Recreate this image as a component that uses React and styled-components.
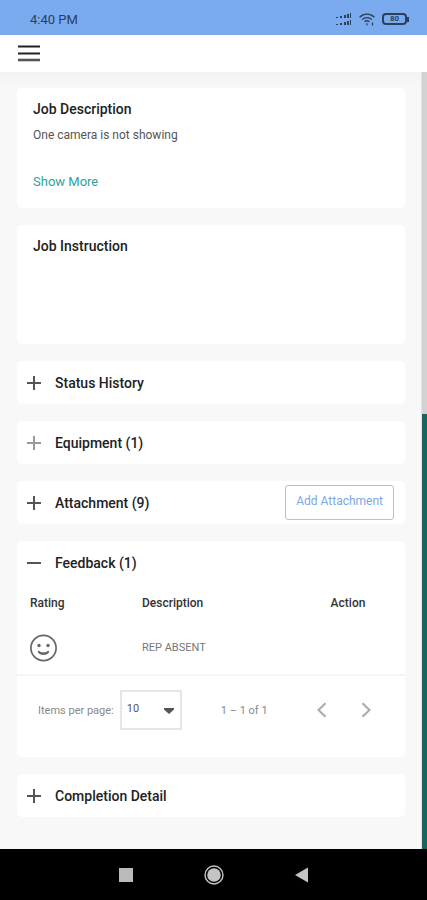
import React, { useState } from 'react'
import styled, { createGlobalStyle } from 'styled-components'

const GlobalStyle = createGlobalStyle`
  * {
    box-sizing: border-box;
  }

  body {
    margin: 0;
    background: #f8f8f8;
    color: #222;
    font-family: Roboto, "Liberation Sans", sans-serif;
    font-size: 14px;
  }

  button, select {
    font-family: inherit;
  }
`;

const Page = styled.div`
  min-height: 100vh;
  display: flex;
  flex-direction: column;
`;

const StatusBar = styled.div`
  height: 35px;
  padding: 3px 18px 0 30px;
  background: #7aabee;
  color: #29405f;
  font-size: 13px;
  display: flex;
  align-items: center;
  justify-content: space-between;
`;

const StatusIcons = styled.div`
  display: flex;
  align-items: center;
  gap: 7px;

  svg {
    display: block;
  }
`;

const Battery = styled.div`
  display: flex;
  align-items: center;
`;

const BatteryBody = styled.span`
  width: 25px;
  height: 12px;
  border: 2px solid #29405f;
  border-radius: 4px;
  font-size: 8px;
  line-height: 8px;
  font-weight: bold;
  text-align: center;
`;

const BatteryTip = styled.span`
  width: 2px;
  height: 5px;
  background: #29405f;
`;

const Header = styled.header`
  height: 37px;
  padding: 0 18px;
  background: white;
  display: flex;
  align-items: center;
`;

const IconButton = styled.button`
  padding: 0;
  border: 0;
  background: transparent;
  color: ${props => props.$color || '#222'};
  display: flex;
  cursor: pointer;
`;

const Body = styled.div`
  flex: 1;
  display: flex;
`;

const Content = styled.main`
  flex: 1;
  min-width: 0;
  padding: 16px 16px 31px 17px;
  background: linear-gradient(#f3f3f3, #f8f8f8 16px);
  display: flex;
  flex-direction: column;
  gap: 17px;
`;

const Track = styled.div`
  width: 6px;
  background: #d2d2d2;
  border-left: 1px solid #e2e2e2;
  display: flex;
  flex-direction: column;
  justify-content: flex-end;
`;

const Thumb = styled.div`
  height: 56%;
  background: #1c635e;
`;

const Card = styled.section`
  min-height: ${props => props.$tall ? '119px' : '43px'};
  padding: ${props => props.$tall ? '12px 16px 16px' : '0'};
  border-radius: 5px;
  background: white;
`;

const Title = styled.h2`
  margin: 0;
  font-size: 14px;
  line-height: 18px;
  font-weight: 500;
`;

const Text = styled.p`
  margin: 8px 0 28px;
  color: #555;
  font-size: 12px;
  line-height: 18px;
`;

const MoreLink = styled.a`
  display: block;
  color: #2ba3a3;
  font-size: 13px;
  line-height: 20px;
  text-decoration: none;
`;

const PanelHead = styled.div`
  height: 43px;
  padding: 0 11px 0 10px;
  display: flex;
  align-items: center;
  gap: 14px;
`;

const AddButton = styled.button`
  height: 35px;
  margin-left: auto;
  padding: 0 10px 4px;
  border: 1px solid #a4c4ef;
  border-radius: 3px;
  background: white;
  color: #79a7e8;
  font-size: 12px;
  cursor: pointer;
`;

const Table = styled.table`
  width: 100%;
  border-collapse: collapse;
  table-layout: fixed;
  font-size: 11px;

  th {
    height: 37px;
    padding: 0;
    color: #333;
    font-size: 12px;
    font-weight: 500;
    text-align: left;
  }

  td {
    height: 54px;
    padding: 0;
    border-bottom: 2px solid #f5f5f5;
    color: #777;
  }

  th:first-child, td:first-child {
    width: 125px;
    padding-left: 13px;
  }

  th:last-child {
    width: 114px;
    text-align: center;
  }

  svg {
    display: block;
  }
`;

const Paginator = styled.div`
  padding: 14px 31px 27px 21px;
  color: #888;
  font-size: 11px;
  display: flex;
  align-items: center;
`;

const PageSize = styled.label`
  display: flex;
  align-items: center;
  gap: 6px;
`;

const SelectBox = styled.span`
  position: relative;
  color: #555;

  select {
    width: 62px;
    height: 40px;
    padding: 0 5px 3px;
    border: 2px solid #e6e6e6;
    border-radius: 0;
    appearance: none;
    background: white;
    color: #555;
    font-size: 11px;
  }

  svg {
    position: absolute;
    right: 8px;
    top: 18px;
    pointer-events: none;
  }
`;

const Range = styled.span`
  margin-left: 39px;
`;

const Arrows = styled.div`
  margin-left: auto;
  display: flex;
  gap: 28px;
`;

const NavBar = styled.nav`
  height: 51px;
  background: black;
  display: flex;
  align-items: center;
  justify-content: center;
  gap: 68px;
`;

const SignalIcon = () => (
  <svg width="17" height="13" viewBox="0 0 17 13" fill="#29405f">
    <path d="M1 4h2v1H1zM5 3h2v2H5zM9 2h2v3H9zM12 1h2v4h-2zM15 0h1v5h-1zM1 11h2v1H1zM5 10h2v2H5zM9 9h2v3H9zM12 8h2v4h-2zM15 7h1v5h-1z" />
  </svg>
)

const WifiIcon = () => (
  <svg width="16" height="13" viewBox="0 0 16 13" fill="none" stroke="#29405f" strokeWidth="1.3">
    <path d="M.6 4.2C4.8.1 11.2.1 15.4 4.2M3.1 6.6c2.8-2.7 7-2.7 9.8 0M5.5 8.8c1.4-1.2 3.6-1.2 5 0" />
    <path d="M8 10.2v2M13.5 9.5v3" />
  </svg>
)

const MenuIcon = () => (
  <svg width="22" height="17" viewBox="0 0 22 17">
    <path d="M0 1.5h22M0 8.5h22" stroke="#222" strokeWidth="2.2" />
    <path d="M0 15h22" stroke="#555" strokeWidth="2.6" />
  </svg>
)

const ToggleIcon = ({ open }) => (
  <svg width="14" height="14" viewBox="0 0 14 14" stroke="currentColor" strokeWidth="2">
    <path d={open ? 'M0 7h14' : 'M0 7h14M7 0v14'} />
  </svg>
)

const SmileIcon = () => (
  <svg width="28" height="28" viewBox="0 0 28 28" fill="none" stroke="#666" strokeWidth="1.7" role="img" aria-label="Good">
    <circle cx="13.5" cy="14" r="12.6" />
    <path d="M8.3 17.2c2.4 3.8 8 3.8 10.4 0" />
    <path d="M8.3 17.2c2.4 2.2 8 2.2 10.4 0" strokeWidth="1" />
    <circle cx="9" cy="11.5" r="1.7" fill="#666" stroke="none" />
    <circle cx="18" cy="11.5" r="1.7" fill="#666" stroke="none" />
  </svg>
)

const Chevron = ({ d }) => (
  <svg width="16" height="16" viewBox="0 0 16 16" fill="none" stroke="currentColor" strokeWidth="2">
    <path d={d} />
  </svg>
)

const Panel = ({ title, color, defaultOpen = false, action, children }) => {
  const [open, setOpen] = useState(defaultOpen)

  return (
    <Card>
      <PanelHead>
        <IconButton
          $color={color || '#555'}
          aria-label={title}
          aria-expanded={open}
          onClick={() => setOpen(!open)}
        >
          <ToggleIcon open={open} />
        </IconButton>
        <Title>{title}</Title>
        {action}
      </PanelHead>
      {open && children}
    </Card>
  )
}

const Feedback = () => (
  <>
    <Table>
      <thead>
        <tr>
          <th>Rating</th>
          <th>Description</th>
          <th>Action</th>
        </tr>
      </thead>
      <tbody>
        <tr>
          <td><SmileIcon /></td>
          <td>REP ABSENT</td>
          <td></td>
        </tr>
      </tbody>
    </Table>
    <Paginator>
      <PageSize>
        Items per page:
        <SelectBox>
          <select defaultValue="10">
            <option>10</option>
            <option>25</option>
            <option>50</option>
          </select>
          <svg width="10" height="6" viewBox="0 0 10 6" fill="#555"><path d="M0 0h10v1.5L5 6 0 1.5z" /></svg>
        </SelectBox>
      </PageSize>
      <Range>1 – 1 of 1</Range>
      <Arrows>
        <IconButton $color="#aaa" aria-label="Previous page"><Chevron d="M11.5 1.2 4.5 8l7 6.8" /></IconButton>
        <IconButton $color="#aaa" aria-label="Next page"><Chevron d="m4.5 1.2 7 6.8-7 6.8" /></IconButton>
      </Arrows>
    </Paginator>
  </>
)

const App = () => (
  <Page>
    <GlobalStyle />
    <StatusBar>
      <span>4:40 PM</span>
      <StatusIcons>
        <SignalIcon />
        <WifiIcon />
        <Battery>
          <BatteryBody>80</BatteryBody>
          <BatteryTip />
        </Battery>
      </StatusIcons>
    </StatusBar>
    <Header>
      <IconButton aria-label="Menu"><MenuIcon /></IconButton>
    </Header>
    <Body>
      <Content>
        <Card $tall>
          <Title>Job Description</Title>
          <Text>One camera is not showing</Text>
          <MoreLink href="#more">Show More</MoreLink>
        </Card>
        <Card $tall>
          <Title>Job Instruction</Title>
        </Card>
        <Panel title="Status History" />
        <Panel title="Equipment (1)" color="#999" />
        <Panel title="Attachment (9)" action={<AddButton>Add Attachment</AddButton>} />
        <Panel title="Feedback (1)" defaultOpen>
          <Feedback />
        </Panel>
        <Panel title="Completion Detail" />
      </Content>
      <Track>
        <Thumb />
      </Track>
    </Body>
    <NavBar>
      <IconButton aria-label="Recent apps">
        <svg width="20" height="20" viewBox="0 0 20 20"><path d="M3 3h14v14H3z" fill="#bbb" /></svg>
      </IconButton>
      <IconButton aria-label="Home">
        <svg width="20" height="20" viewBox="0 0 20 20">
          <circle cx="10" cy="10" r="9" fill="none" stroke="#c4c4c4" strokeWidth="1.4" />
          <circle cx="10" cy="10" r="6.8" fill="#c4c4c4" />
        </svg>
      </IconButton>
      <IconButton aria-label="Back">
        <svg width="20" height="20" viewBox="0 0 20 20"><path d="M16 2.5v15L3 10z" fill="#c4c4c4" /></svg>
      </IconButton>
    </NavBar>
  </Page>
)

export default App
